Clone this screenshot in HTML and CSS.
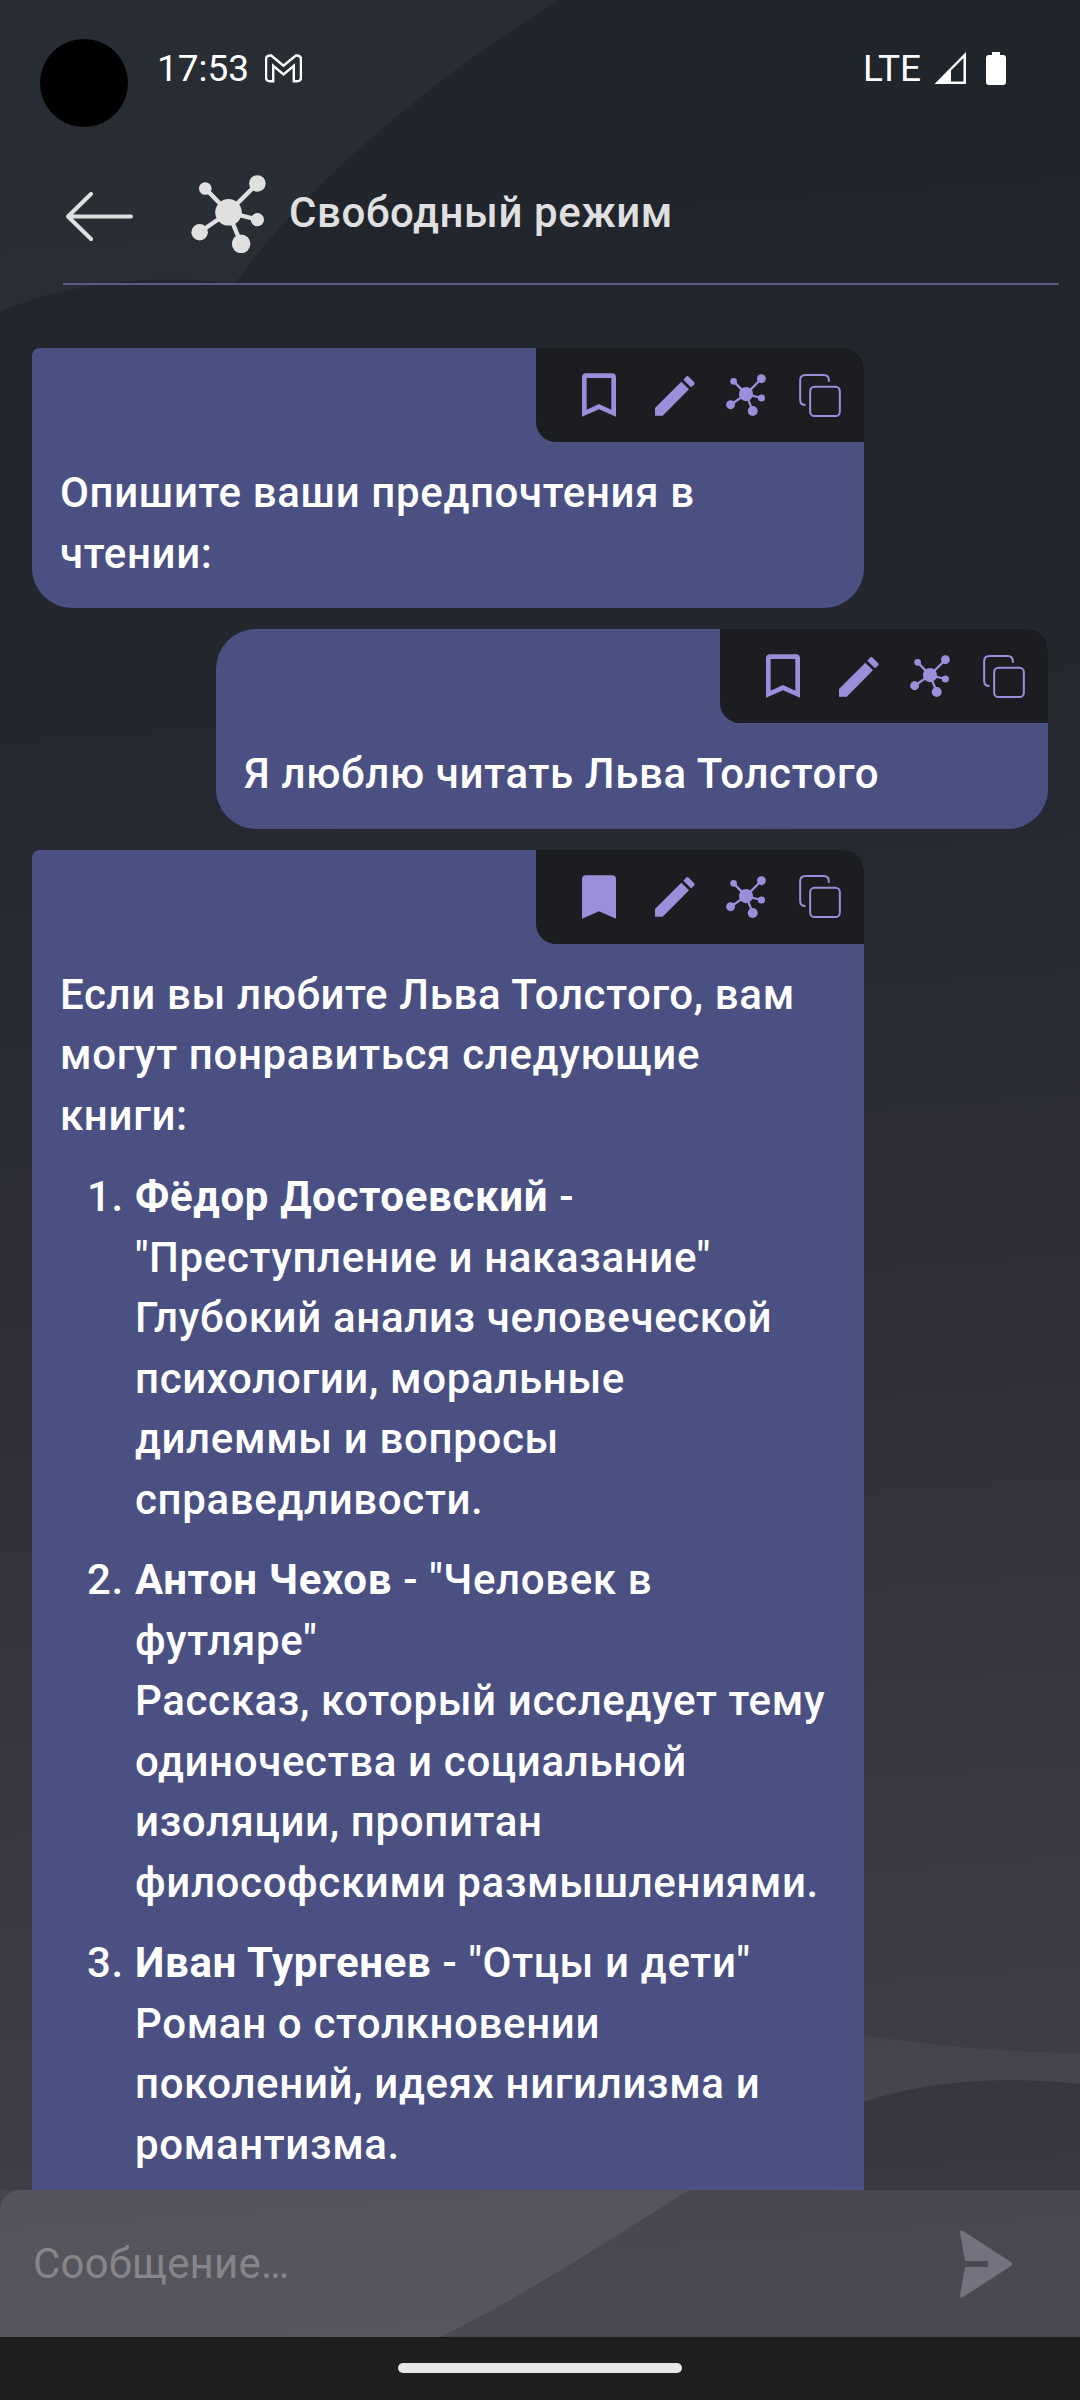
FILE: index.html
```html
<!DOCTYPE html>
<html lang="ru">
<head>
    <meta charset="UTF-8">
    <meta name="viewport" content="width=device-width, initial-scale=1.0">
    <title>Свободный режим</title>
    <link rel="stylesheet" href="styles.css">
</head>
<body>

    <svg class="defs" width="0" height="0">
        <symbol id="net" viewBox="512 78 226 234">
            <g stroke="currentColor" stroke-width="13">
                <line x1="625" y1="190" x2="712" y2="103"/>
                <line x1="625" y1="190" x2="555" y2="118"/>
                <line x1="625" y1="190" x2="538" y2="250"/>
                <line x1="625" y1="190" x2="663" y2="285"/>
                <line x1="625" y1="190" x2="712" y2="212"/>
            </g>
            <g fill="currentColor">
                <circle cx="625" cy="190" r="40"/>
                <circle cx="712" cy="103" r="25"/>
                <circle cx="555" cy="118" r="19"/>
                <circle cx="538" cy="250" r="25"/>
                <circle cx="663" cy="285" r="28"/>
                <circle cx="712" cy="212" r="20"/>
            </g>
        </symbol>
        <symbol id="pencil" viewBox="405 107 120 121">
            <path fill="currentColor" d="M405 205 484 126 507 149 428 228H405Z"/>
            <path fill="currentColor" d="M490 120 498 111Q502 107 506 111L522 127Q526 131 522 135L513 143Z"/>
        </symbol>
        <symbol id="copy" viewBox="836 101 125 129">
            <path fill="none" stroke="currentColor" stroke-width="6" d="M925 124V120Q925 104 909 104H855Q839 104 839 120V178Q839 194 855 194"/>
            <rect x="869" y="139" width="89" height="88" rx="13" fill="none" stroke="currentColor" stroke-width="6"/>
        </symbol>
    </svg>

    <div class="phone">
        <svg class="backdrop" width="1080" height="2400" viewBox="0 0 1080 2400">
            <path fill="#fff" fill-opacity="0.04" d="M0 0H558C430 80 300 190 235 284 150 272 60 285 0 312Z"/>
            <path fill="#fff" fill-opacity="0.04" d="M864 2035C940 2047 1020 2053 1080 2053V2084C1000 2075 920 2082 864 2102 800 2122 740 2150 689 2190 610 2240 525 2295 441 2337H0V2190H32V2030Z"/>
            <path fill="#000" fill-opacity="0.1" d="M441 2337C525 2295 610 2240 689 2190 740 2150 800 2122 864 2102 920 2082 1000 2075 1080 2084V2337Z"/>
        </svg>

        <div class="camera"></div>

        <div class="status">
            <span class="time">17:53</span>
            <svg class="gmail" width="37" height="29" viewBox="378 72 108 82">
                <path fill="none" stroke="#fff" stroke-width="7" d="M381 87Q381 75 393 75H396L432 105 468 75H471Q483 75 483 87V139Q483 150 472 150H462V105L432 130 402 105V150H392Q381 150 381 139Z"/>
            </svg>
            <span class="spacer"></span>
            <span class="lte">LTE</span>
            <svg class="signal" width="33" height="33" viewBox="0 0 33 33">
                <path fill="#fff" d="M0 32.500 32 0V32H29.500V6L17 18.500V32H0Z"/>
                <path fill="#fff" d="M17 29.500H31V32H17Z"/>
            </svg>
            <svg class="battery" width="20" height="33" viewBox="0 0 20 33">
                <path fill="#fff" d="M6 0H14V3H17Q20 3 20 6V30Q20 33 17 33H3Q0 33 0 30V6Q0 3 3 3H6Z"/>
            </svg>
        </div>

        <div class="header">
            <svg class="back" width="68" height="50" viewBox="0 0 68 50">
                <path fill="none" stroke="#e0e0e0" stroke-width="4" stroke-linecap="round" stroke-linejoin="round" d="M65 24.500H2M25 2 2 24.500 25 47"/>
            </svg>
            <svg class="mode-icon" width="75" height="78"><use href="#net"/></svg>
            <span class="title">Свободный режим</span>
        </div>

        <div class="messages">
            <div class="bubble">
                <div class="tools">
                    <svg class="bookmark" width="34" height="44" viewBox="186 100 102 130">
                        <path fill="currentColor" fill-rule="evenodd" d="M186 230V112Q186 100 198 100H276Q288 100 288 112V230L237 208ZM200 114V209L237 192 274 209V114Z"/>
                    </svg>
                    <svg class="edit" width="40" height="41"><use href="#pencil"/></svg>
                    <svg class="branch" width="40" height="42"><use href="#net"/></svg>
                    <svg width="42" height="43"><use href="#copy"/></svg>
                </div>
                <p>Опишите ваши предпочтения в чтении:</p>
            </div>

            <div class="bubble user">
                <div class="tools">
                    <svg class="bookmark" width="34" height="44" viewBox="186 100 102 130">
                        <path fill="currentColor" fill-rule="evenodd" d="M186 230V112Q186 100 198 100H276Q288 100 288 112V230L237 208ZM200 114V209L237 192 274 209V114Z"/>
                    </svg>
                    <svg class="edit" width="40" height="41"><use href="#pencil"/></svg>
                    <svg class="branch" width="40" height="42"><use href="#net"/></svg>
                    <svg width="42" height="43"><use href="#copy"/></svg>
                </div>
                <p>Я люблю читать Льва Толстого</p>
            </div>

            <div class="bubble long">
                <div class="tools">
                    <svg class="bookmark" width="34" height="44" viewBox="186 100 102 130">
                        <path fill="currentColor" d="M186 230V112Q186 100 198 100H276Q288 100 288 112V230L237 208Z"/>
                    </svg>
                    <svg class="edit" width="40" height="41"><use href="#pencil"/></svg>
                    <svg class="branch" width="40" height="42"><use href="#net"/></svg>
                    <svg width="42" height="43"><use href="#copy"/></svg>
                </div>
                <p>Если вы любите Льва Толстого, вам могут понравиться следующие книги:</p>
                <ol>
                    <li><b>Фёдор Достоевский</b> - "Преступление и наказание"<br>Глубокий анализ человеческой психологии, моральные дилеммы и вопросы справедливости.</li>
                    <li><b>Антон Чехов</b> - "Человек в футляре"<br>Рассказ, который исследует тему одиночества и социальной изоляции, пропитан философскими размышлениями.</li>
                    <li><b>Иван Тургенев</b> - "Отцы и дети"<br>Роман о столкновении поколений, идеях нигилизма и романтизма.</li>
                </ol>
            </div>
        </div>

        <div class="composer">
            <input class="message-input" type="text" placeholder="Сообщение…">
            <svg class="send" width="54" height="70" viewBox="0 0 54 70">
                <path fill="#73737f" d="M1 3Q1 0 4 2L52 33Q54 35 52 37L4 68Q1 70 1 67L6 38H29V32H6Z"/>
            </svg>
        </div>

        <div class="navbar">
            <div class="home"></div>
        </div>
    </div>

</body>
</html>
```

FILE: styles.css
```css
* {
    box-sizing: border-box;
}

body {
    margin: 0;
    font-family: Roboto, "Noto Sans", sans-serif;
    background-color: #22252c;
}

.defs {
    position: absolute;
}

.phone {
    position: relative;
    display: flex;
    flex-direction: column;
    width: 1080px;
    height: 2400px;
    overflow: hidden;
    background: linear-gradient(176deg, #20242b 0%, #24272e 30%, #2f2f38 57%, #3c3b44 80%, #44434d 100%);
}

.backdrop {
    position: absolute;
    top: 0;
    left: 0;
}

.camera {
    position: absolute;
    top: 39px;
    left: 40px;
    width: 88px;
    height: 88px;
    border-radius: 50%;
    background-color: #000;
}

.status {
    position: relative;
    display: flex;
    align-items: center;
    flex: none;
    height: 136px;
    padding: 0 74px 0 157px;
    color: #fff;
    font-size: 37px;
}

.gmail {
    margin-left: 16px;
}

.spacer {
    flex: 1;
}

.lte {
    margin-right: 1px;
}

.signal {
    margin-left: 12px;
}

.battery {
    margin-left: 19px;
}

.header {
    position: relative;
    display: flex;
    align-items: center;
    flex: none;
    height: 149px;
    margin: 0 21px 0 63px;
    padding-top: 10px;
    padding-bottom: 4px;
    border-bottom: 2px solid #5a5a86;
    color: #e0e0e0;
}

.back {
    margin-top: 8px;
    margin-left: 3px;
}

.mode-icon {
    margin-top: 2px;
    margin-left: 57px;
}

.title {
    margin-left: 23px;
    font-size: 42px;
    font-weight: 500;
    letter-spacing: 0.6px;
}

.messages {
    position: relative;
    display: flex;
    flex-direction: column;
    align-items: flex-start;
    flex: 1;
    gap: 21px;
    min-height: 0;
    overflow: hidden;
    padding: 63px 32px 0;
}

.bubble {
    flex: none;
    width: 832px;
    padding-bottom: 24px;
    border-radius: 8px 20px 40px 40px;
    background-color: #4b5083;
    color: #fff;
    font-size: 42px;
    font-weight: 500;
    letter-spacing: 0.65px;
    line-height: 60.500px;
}

.user {
    align-self: flex-end;
    border-top-left-radius: 40px;
}

/* the answer goes on under the input, the bar cuts it off */
.long {
    padding-bottom: 200px;
}

.tools {
    display: flex;
    align-items: center;
    gap: 33px;
    width: 328px;
    height: 94px;
    margin-left: auto;
    padding-left: 46px;
    border-radius: 0 20px 0 20px;
    background-color: #1c1d21;
    color: #9b8fdc;
}

.bookmark {
    margin-right: 6px;
}

.edit {
    margin-right: -2px;
}

.bubble p {
    margin: 21px 29px 0 28px;
}

.bubble ol {
    margin: 21px 36px 0 0;
    padding-left: 103px;
}

.bubble li + li {
    margin-top: 20px;
}

.bubble b {
    font-weight: 700;
}

.composer {
    position: relative;
    display: flex;
    align-items: center;
    flex: none;
    height: 147px;
    padding: 0 67px 0 33px;
    border-top-left-radius: 20px;
    background-color: rgba(255, 255, 255, 0.08);
}

.message-input {
    flex: 1;
    min-width: 0;
    padding: 0;
    border: none;
    outline: none;
    background: none;
    color: #fff;
    font-family: inherit;
    font-size: 42px;
    letter-spacing: 0.2px;
}

.message-input::placeholder {
    color: #85858a;
    opacity: 1;
}

.navbar {
    position: relative;
    display: flex;
    justify-content: center;
    flex: none;
    height: 63px;
    padding-top: 26px;
    background-color: #1f1f1f;
}

.home {
    width: 284px;
    height: 10px;
    border-radius: 5px;
    background-color: #e8e8e8;
}
```
